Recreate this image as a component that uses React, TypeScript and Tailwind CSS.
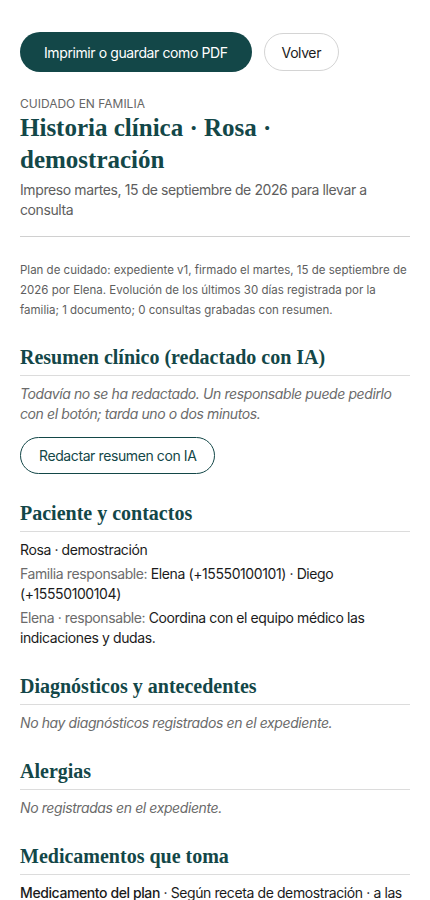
import React from "react";

const serif = "font-['Liberation_Serif',serif]";

const Section = ({ title, children, className = "" }: { title: string; children: React.ReactNode; className?: string }) => (
  <section className={className}>
    <h2 className={`${serif} border-b border-[#dcdcdc] pb-[5px] text-[20px] leading-[26px] font-bold tracking-normal text-[#134748]`}>
      {title}
    </h2>
    <div className="pt-2">{children}</div>
  </section>
);

const Empty = ({ children }: { children: React.ReactNode }) => (
  <p className="text-[14px] leading-[20px] italic text-[#6b6b6b]">{children}</p>
);

export default function App() {
  return (
    <div className="min-h-[900px] bg-white px-5 pt-8 font-['Inter',sans-serif] tracking-[-0.025em] text-[#1b1b1b]">
      <div className="flex items-center gap-3">
        <button className="h-10 rounded-full bg-[#134748] px-6 text-[14px] text-white">
          Imprimir o guardar como PDF
        </button>
        <button className="h-[38px] rounded-full border border-[#d4d4d4] px-[17px] text-[14px] text-[#1b1b1b]">
          Volver
        </button>
      </div>

      <header className="mt-6 border-b border-[#d0d0d0] pb-4">
        <p className="text-[12px] leading-[16px] tracking-normal text-[#666]">CUIDADO EN FAMILIA</p>
        <h1 className={`${serif} text-[25px] leading-[32px] font-bold tracking-normal text-[#134748]`}>
          Historia clínica · Rosa · demostración
        </h1>
        <p className="mt-1 text-[14px] leading-[20px] text-[#5e5e5e]">
          Impreso martes, 15 de septiembre de 2026 para llevar a consulta
        </p>
      </header>

      <p className="mt-[23px] text-[11.5px] leading-[20px] tracking-normal text-[#5e5e5e]">
        Plan de cuidado: expediente v1, firmado el martes, 15 de septiembre de 2026 por Elena. Evolución de los últimos
        30 días registrada por la familia; 1 documento; 0 consultas grabadas con resumen.
      </p>

      <Section title="Resumen clínico (redactado con IA)" className="mt-6">
        <Empty>
          Todavía no se ha redactado. Un responsable puede pedirlo con el botón; tarda uno o dos minutos.
        </Empty>
        <button className="mt-[13px] h-[37px] rounded-full border border-[#134748] px-[18px] text-[14px] text-[#134748]">
          Redactar resumen con IA
        </button>
      </Section>

      <Section title="Paciente y contactos" className="mt-[26px]">
        <div className="flex flex-col gap-1 text-[14px] leading-[20px]">
          <p>Rosa · demostración</p>
          <p>
            <span className="text-[#6b6b6b]">Familia responsable: </span>Elena (+15550100101) · Diego (+15550100104)
          </p>
          <p>
            <span className="text-[#6b6b6b]">Elena · responsable: </span>Coordina con el equipo médico las indicaciones y
            dudas.
          </p>
        </div>
      </Section>

      <Section title="Diagnósticos y antecedentes" className="mt-[25px]">
        <Empty>No hay diagnósticos registrados en el expediente.</Empty>
      </Section>

      <Section title="Alergias" className="mt-[25px]">
        <Empty>No registradas en el expediente.</Empty>
      </Section>

      <Section title="Medicamentos que toma" className="mt-[25px]">
        <p className="text-[14px] leading-[20px]">
          <span className="font-medium">Medicamento del plan</span> · Según receta de demostración · a las 08:00 y 20:00
        </p>
      </Section>
    </div>
  );
}
